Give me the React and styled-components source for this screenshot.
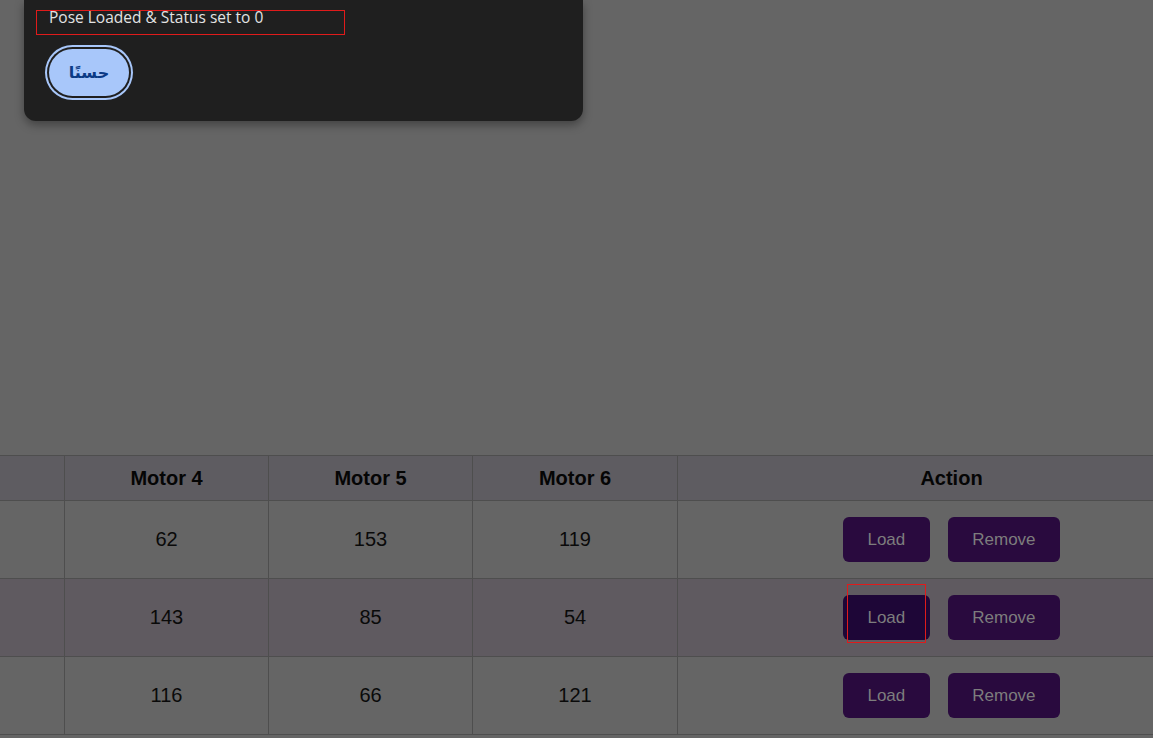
import styled, { createGlobalStyle } from 'styled-components';

const GlobalStyle = createGlobalStyle`
  html, body {
    margin: 0;
    padding: 0;
    background: #656565;
    overflow: hidden;
  }
  body {
    width: 1153px;
    height: 738px;
    font-family: "Liberation Sans", Arial, sans-serif;
  }
`;

const poses = [
  { id: 1, m4: 62, m5: 153, m6: 119 },
  { id: 2, m4: 143, m5: 85, m6: 54, hover: true },
  { id: 3, m4: 116, m5: 66, m6: 121 },
];

const App = () => {
  return (
    <Page>
      <GlobalStyle />
      <TableWrap>
        <Table>
          <colgroup>
            <col style={{ width: 204 }} />
            <col style={{ width: 204 }} />
            <col style={{ width: 204 }} />
            <col style={{ width: 205 }} />
            <col style={{ width: 548 }} />
          </colgroup>
          <thead>
            <tr>
              <Th />
              <Th>Motor 4</Th>
              <Th>Motor 5</Th>
              <Th>Motor 6</Th>
              <Th>Action</Th>
            </tr>
          </thead>
          <tbody>
            {poses.map((p) => (
              <Row key={p.id} hover={p.hover}>
                <Td />
                <Td>{p.m4}</Td>
                <Td>{p.m5}</Td>
                <Td>{p.m6}</Td>
                <Td>
                  <Actions>
                    <ActionBtn hover={p.hover}>Load</ActionBtn>
                    <ActionBtn>Remove</ActionBtn>
                  </Actions>
                </Td>
              </Row>
            ))}
          </tbody>
        </Table>
      </TableWrap>

      <Dialog>
        <Message>Pose Loaded &amp; Status set to 0</Message>
        <OkButton>حسنًا</OkButton>
      </Dialog>

      <Mark style={{ left: 36, top: 10, width: 307, height: 23 }} />
      <Mark style={{ left: 847, top: 584, width: 77, height: 57 }} />
    </Page>
  );
};

const Page = styled.div`
  position: relative;
  width: 1153px;
  height: 738px;
  overflow: hidden;
`;

const TableWrap = styled.div`
  padding-top: 455px;
  width: 1153px;
  overflow: hidden;
`;

const Table = styled.table`
  margin-left: -140px;
  border-collapse: collapse;
  table-layout: fixed;
  width: 1365px;
`;

const Th = styled.th`
  background: #5e5c61;
  border: 1px solid #4e4e4e;
  padding: 10px 0;
  height: 24px;
  line-height: 24px;
  font-size: 20px;
  font-weight: 700;
  color: #050505;
  text-align: center;
`;

const Row = styled.tr`
  background: ${(p) => (p.hover ? '#5f5a60' : '#656565')};
`;

const Td = styled.td`
  border: 1px solid #4e4e4e;
  padding: 16px 0;
  height: 45px;
  font-size: 20px;
  color: #0a0a0a;
  text-align: center;
`;

const Actions = styled.div`
  display: flex;
  justify-content: center;
  gap: 18px;
`;

const ActionBtn = styled.button`
  height: 45px;
  padding: 0 24.5px;
  border: none;
  border-radius: 6px;
  background: ${(p) => (p.hover ? '#1e0637' : '#290a3e')};
  color: #7d7d7d;
  font-family: "Liberation Sans", Arial, sans-serif;
  font-size: 17px;
`;

const Dialog = styled.div`
  position: absolute;
  left: 24px;
  top: 0;
  width: 559px;
  height: 121px;
  box-sizing: border-box;
  padding: 7px 25px 25px;
  background: #1f1f1f;
  border-radius: 0 0 12px 12px;
  box-shadow: 0 4px 10px rgba(0, 0, 0, 0.35);
  display: flex;
  flex-direction: column;
  align-items: flex-start;
  gap: 21px;
`;

const Message = styled.div`
  font-family: "Open Sans", "Noto Sans", sans-serif;
  font-size: 15.5px;
  line-height: 21px;
  color: #e3e3e3;
`;

const OkButton = styled.button`
  width: 80px;
  height: 47px;
  border: none;
  border-radius: 24px;
  background: #a8c7fa;
  color: #0b3a85;
  font-family: "DejaVu Sans", "Noto Sans", sans-serif;
  font-size: 16px;
  font-weight: 700;
  box-shadow: 0 0 0 2px #1f1f1f, 0 0 0 4px #a8c7fa;
`;

const Mark = styled.div`
  position: absolute;
  border: 1px solid #e01b1b;
  pointer-events: none;
`;

export default App;
